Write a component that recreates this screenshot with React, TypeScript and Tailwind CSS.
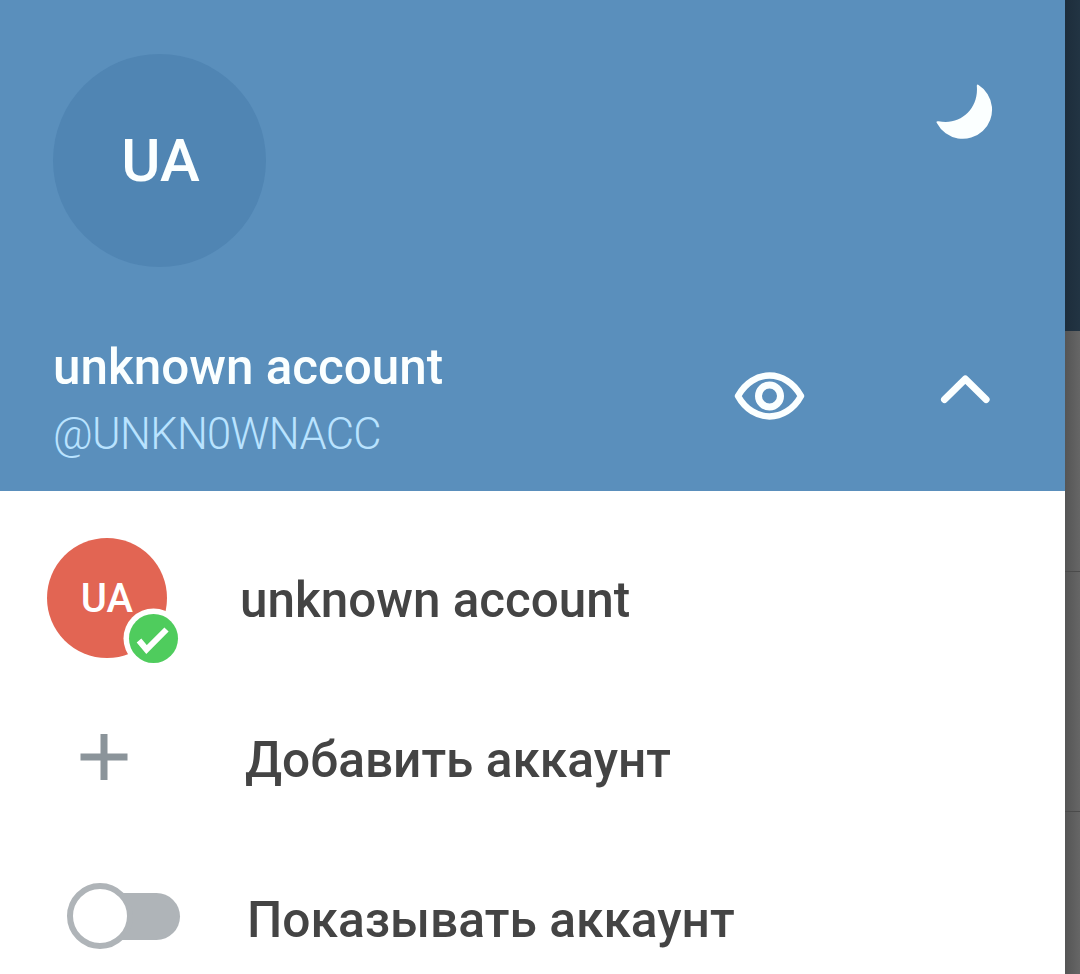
import type { ReactNode } from "react";

function MoonIcon() {
  return (
    <svg width="64" height="64" viewBox="0 0 64 64" fill="#fbffff">
      <path d="M46.200 4.800Q44.800 3.600 44.800 6C47 29 28 46 6.500 41.300Q3.400 41 5 43.200A29.200 29.200 0 1 0 46.200 4.800Z" />
    </svg>
  );
}

function EyeIcon() {
  return (
    <svg width="72" height="52" viewBox="0 0 72 52" fill="none" stroke="#fbffff">
      <path
        d="M4 26C19 -1.200 52 -1.200 67 26C52 53.200 19 53.200 4 26Z"
        strokeWidth="6.500"
        strokeLinejoin="round"
      />
      <circle cx="35.500" cy="26" r="11" strokeWidth="7" />
    </svg>
  );
}

function ChevronIcon() {
  return (
    <svg width="54" height="34" viewBox="0 0 54 34" fill="none" stroke="#fbffff">
      <path
        d="M6.500 27.500L27.300 7L48.100 27.500"
        strokeWidth="7"
        strokeLinecap="round"
        strokeLinejoin="round"
      />
    </svg>
  );
}

function AccountAvatar() {
  return (
    <div className="relative ml-[47px] flex size-[120px] items-center justify-center rounded-full bg-[#e26553]">
      <span className="pt-0.5 text-[40px] font-medium leading-none text-white">UA</span>
      <svg className="absolute left-[76px] top-[68px]" width="60" height="60" viewBox="0 0 60 60">
        <circle cx="30.500" cy="32.500" r="30" fill="#fff" />
        <circle cx="30.500" cy="32.500" r="24.500" fill="#4fcc5d" />
        <path d="M16 34.500L23.500 43.500L43.500 23.500" fill="none" stroke="#fff" strokeWidth="6" />
      </svg>
    </div>
  );
}

function PlusIcon() {
  return (
    <svg className="ml-[80px]" width="48" height="48" viewBox="0 0 48 48" fill="#8b949a">
      <path d="M20.500 1H27.500V20.500H47.500V27.500H27.500V47H20.500V27.500H0.500V20.500H20.500Z" />
    </svg>
  );
}

function Toggle() {
  return (
    <div className="ml-[67px] flex items-center">
      <div className="z-10 size-[66px] rounded-full border-[6px] border-[#afb4b8] bg-white" />
      <div className="-ml-5 mt-px h-[47px] w-[67px] rounded-r-full bg-[#afb4b8]" />
    </div>
  );
}

interface MenuRowProps {
  icon: ReactNode;
  label: string;
  className: string;
}

function MenuRow({ icon, label, className }: MenuRowProps) {
  return (
    <div className="flex h-[159px] shrink-0 items-center">
      <div className="w-[240px] shrink-0">{icon}</div>
      <span className={`whitespace-nowrap font-medium leading-none text-[#444] ${className}`}>
        {label}
      </span>
    </div>
  );
}

export default function App() {
  return (
    <div className="flex h-[974px] w-[1080px] overflow-hidden bg-white font-['Roboto',sans-serif]">
      <aside className="flex w-[1065px] shrink-0 flex-col">
        <header className="flex h-[491px] shrink-0 flex-col bg-[#5a8fbc]">
          <div className="flex justify-between pl-[53px] pr-[69px] pt-[54px]">
            <div className="flex size-[213px] items-center justify-center rounded-full bg-[#5085b3]">
              <span className="pl-0.5 text-[60px] font-medium leading-none text-[#fbffff]">UA</span>
            </div>
            <div className="pt-[26px]">
              <MoonIcon />
            </div>
          </div>
          <div className="flex pl-[53px] pt-[70px]">
            <div className="w-[681px]">
              <p className="text-[49.4px] font-medium leading-[61px] text-[#fbffff]">unknown account</p>
              <p className="text-[43.5px] font-light leading-[73px] tracking-[-0.7px] text-[#b9e3ff]">
                @UNKN0WNACC
              </p>
            </div>
            <div className="pt-[33px]">
              <EyeIcon />
            </div>
            <div className="ml-[132px] pt-[35px]">
              <ChevronIcon />
            </div>
          </div>
        </header>
        <nav className="flex flex-col pt-[27px]">
          <MenuRow icon={<AccountAvatar />} label="unknown account" className="pt-[7px] text-[49.4px]" />
          <MenuRow icon={<PlusIcon />} label="Добавить аккаунт" className="pl-[5px] pt-[9px] text-[49.600px]" />
          <MenuRow icon={<Toggle />} label="Показывать аккаунт" className="pl-[7px] pt-[10px] text-[49.700px]" />
        </nav>
      </aside>
      <div className="flex flex-1 flex-col bg-linear-to-r from-[#555] to-[#666]">
        <div className="h-[331px] bg-linear-to-r from-[#1d2d3b] to-[#223443]" />
        <div className="h-[241px] border-b border-[#4b4b4b]" />
        <div className="h-[240px] border-b border-[#4b4b4b]" />
      </div>
    </div>
  );
}
